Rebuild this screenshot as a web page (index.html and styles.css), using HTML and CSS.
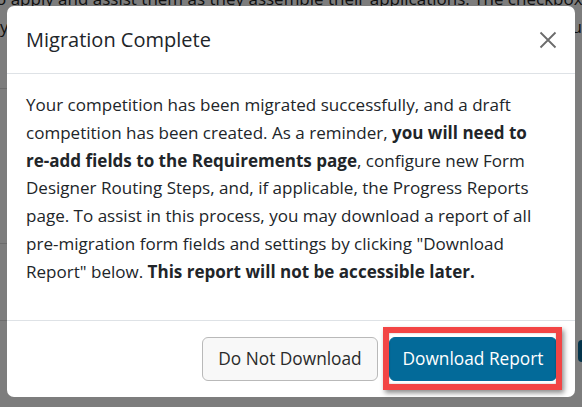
FILE: index.html
```html
<!DOCTYPE html>
<html>
<head>
<meta charset="utf-8">
<link rel="stylesheet" href="styles.css">
</head>
<body>
<div class="page">
  <p class="bg-line bg-line-1">o apply and assist them as they assemble their applications. The checkbox</p>
  <p class="bg-line bg-line-2"><span>y</span><span>u</span></p>
  <div class="bg-rule bg-rule-1"></div>
  <div class="bg-rule bg-rule-2"></div>
  <div class="bg-rule bg-rule-3"></div>
  <div class="bg-btn"></div>
</div>
<div class="backdrop"></div>
<div class="modal">
  <div class="modal-header">
    <h2 class="modal-title">Migration Complete</h2>
    <button class="close" aria-label="Close">
      <svg width="18" height="18" viewBox="0 0 18 18"><path d="M1.5 1.5 L16.5 16.5 M16.5 1.5 L1.5 16.5" stroke="#6b6b6b" stroke-width="1.8" fill="none"/></svg>
    </button>
  </div>
  <div class="modal-body">
    <p>Your competition has been migrated successfully, and a draft competition has been created. As a reminder, <b>you will need to <span class="nw">re-add</span> fields to the Requirements page</b>, configure new Form Designer Routing Steps, and, if applicable, the Progress Reports page. To assist in this process, you may download a report of all <span class="nw">pre-migration</span> form fields and settings by clicking "Download Report" below. <b>This report will not be accessible later.</b></p>
  </div>
  <div class="modal-footer">
    <button class="btn btn-secondary">Do Not Download</button>
    <button class="btn btn-primary">Download Report</button>
  </div>
</div>
</body>
</html>
```
FILE: styles.css
```css
html, body {
  margin: 0;
  padding: 0;
  width: 582px;
  height: 407px;
  overflow: hidden;
  font-family: "Open Sans", "Noto Sans", sans-serif;
}
body {
  background: #ffffff;
  position: relative;
}
.page {
  position: absolute;
  inset: 0;
  color: #222;
}
.bg-line {
  margin: 0;
  position: absolute;
  left: 0;
  right: 0;
  font-size: 17px;
  white-space: nowrap;
  overflow: hidden;
}
.bg-line-1 { top: -13px; left: -4px; }
.bg-line-2 { top: 15px; display: flex; justify-content: space-between; }
.bg-rule {
  position: absolute;
  left: 0;
  width: 10px;
  height: 1px;
  background: #ddd;
}
.bg-rule-1 { top: 88px; }
.bg-rule-2 { top: 243px; }
.bg-rule-3 { top: 320px; }
.bg-btn {
  position: absolute;
  right: -8px;
  top: 340px;
  width: 12px;
  height: 22px;
  border-radius: 4px;
  background: #0a6b9a;
}
.backdrop {
  position: absolute;
  inset: 0;
  background: rgba(0, 0, 0, 0.51);
}
.modal {
  position: absolute;
  left: 7px;
  top: 6px;
  width: 568px;
  height: 391px;
  background: #fff;
  border-radius: 7px;
  display: flex;
  flex-direction: column;
  color: #212529;
  box-sizing: border-box;
}
.modal-header {
  height: 68px;
  display: flex;
  align-items: center;
  justify-content: space-between;
  padding: 0 18px 0 19px;
  border-bottom: 1px solid #dee2e6;
  box-sizing: border-box;
}
.modal-title {
  margin: 0;
  font-size: 20px;
  font-weight: 500;
  color: #212529;
}
.close {
  background: none;
  border: 0;
  padding: 0;
  width: 18px;
  height: 18px;
  display: flex;
}
.modal-body {
  padding: 17px 18px 0 19px;
  height: 247px;
  box-sizing: border-box;
  border-bottom: 1px solid #dee2e6;
}
.modal-body p {
  margin: 0;
  font-size: 17.05px;
  line-height: 27.8px;
}
.nw { white-space: nowrap; }
.modal-footer {
  flex: 1;
  display: flex;
  justify-content: flex-end;
  align-items: center;
  gap: 11px;
  padding: 0 18px 1px 0;
}
.btn {
  font-family: inherit;
  font-size: 17.3px;
  height: 44px;
  border-radius: 6px;
  padding: 0;
  box-sizing: border-box;
}
.btn-secondary {
  width: 176px;
  background: #f8f8f8;
  border: 1px solid #b9b9b9;
  color: #2a2a2a;
}
.btn-primary {
  width: 168px;
  background: #036a99;
  border: 1px solid #036a99;
  color: #fff;
  position: relative;
}
.btn-primary::after {
  content: "";
  position: absolute;
  left: -7px;
  right: -6px;
  top: -11px;
  bottom: -10px;
  border: 6px solid #f24545;
  box-shadow: 2px 3px 5px rgba(0,0,0,0.45), inset 0 0 2px rgba(0,0,0,0.3);
}
```
